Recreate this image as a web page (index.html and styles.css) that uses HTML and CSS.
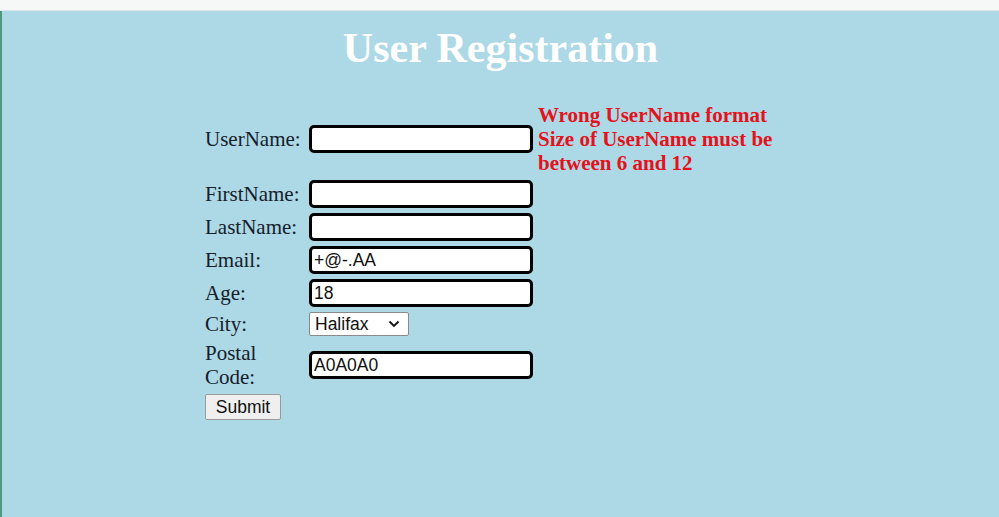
FILE: index.html
```html
<!DOCTYPE html>
<html lang="en">
<head>
<meta charset="utf-8">
<title>User Registration</title>
<link rel="stylesheet" href="styles.css">
</head>
<body>
<div class="topbar"></div>
<main class="page">
  <h1 class="title">User Registration</h1>
  <form class="reg-form">
    <table class="reg-table">
      <tr>
        <td class="label">UserName:</td>
        <td class="field"><input class="text-input" type="text" value=""></td>
        <td class="error">Wrong UserName format<br>Size of UserName must be between 6 and 12</td>
      </tr>
      <tr>
        <td class="label">FirstName:</td>
        <td class="field"><input class="text-input" type="text" value=""></td>
        <td class="error"></td>
      </tr>
      <tr>
        <td class="label">LastName:</td>
        <td class="field"><input class="text-input" type="text" value=""></td>
        <td class="error"></td>
      </tr>
      <tr>
        <td class="label">Email:</td>
        <td class="field"><input class="text-input" type="text" value="+@-.AA"></td>
        <td class="error"></td>
      </tr>
      <tr>
        <td class="label">Age:</td>
        <td class="field"><input class="text-input" type="text" value="18"></td>
        <td class="error"></td>
      </tr>
      <tr>
        <td class="label">City:</td>
        <td class="field">
          <div class="select">
            <span class="select-value">Halifax</span>
            <svg class="chevron" width="12" height="8" viewBox="0 0 12 8"><path d="M1.5 1.5 L6 6 L10.5 1.5" fill="none" stroke="#111" stroke-width="1.8"/></svg>
          </div>
        </td>
        <td class="error"></td>
      </tr>
      <tr>
        <td class="label">Postal Code:</td>
        <td class="field"><input class="text-input" type="text" value="A0A0A0"></td>
        <td class="error"></td>
      </tr>
      <tr>
        <td class="label"><button class="submit" type="button">Submit</button></td>
        <td class="field"></td>
        <td class="error"></td>
      </tr>
    </table>
  </form>
</main>
</body>
</html>
```

FILE: styles.css
```css
html, body {
  margin: 0;
  padding: 0;
}
body {
  background: #add8e6;
  font-family: "Liberation Serif", "Times New Roman", serif;
  color: #111;
}
.topbar {
  height: 10px;
  background: #f6f7f7;
  border-bottom: 1px solid #dde6e8;
}
.page {
  border-left: 2px solid #4f9a7c;
  min-height: 506px;
  box-sizing: border-box;
}
.title {
  margin: 0;
  padding-top: 13px;
  font-size: 42px;
  line-height: 48px;
  font-weight: bold;
  color: #ffffff;
  text-align: center;
}
.reg-form {
  margin: 27px 0 0 0;
}
.reg-table {
  border-collapse: separate;
  border-spacing: 3px;
  margin: 0 auto;
}
.reg-table td {
  padding: 1px;
  vertical-align: middle;
}
.label {
  width: 99px;
  font-size: 21px;
  line-height: 24px;
  color: #15202a;
}
.field {
  width: 224px;
}
.error {
  width: 258px;
  color: #e3121b;
  font-weight: bold;
  font-size: 21px;
  line-height: 24px;
}
.text-input {
  display: block;
  box-sizing: border-box;
  width: 224px;
  height: 28px;
  margin: 0;
  padding: 0 2px;
  border: 3px solid #000;
  border-radius: 5px;
  background: #fff;
  font-family: "Liberation Sans", Arial, sans-serif;
  font-size: 17.5px;
  color: #111;
  outline: none;
}
.select {
  box-sizing: border-box;
  width: 100px;
  height: 24px;
  border: 1px solid #8a8a8a;
  border-radius: 2px;
  background: #fff;
  display: flex;
  align-items: center;
  justify-content: space-between;
  padding: 0 8px 0 5px;
  font-family: "Liberation Sans", Arial, sans-serif;
  font-size: 17.5px;
  color: #111;
}
.chevron {
  display: block;
}
.submit {
  display: block;
  box-sizing: border-box;
  width: 76px;
  height: 26px;
  margin: 0;
  padding: 0;
  border: 1px solid #9a9a9a;
  border-radius: 2px;
  background: #efefef;
  font-family: "Liberation Sans", Arial, sans-serif;
  font-size: 17.5px;
  color: #111;
}
```
